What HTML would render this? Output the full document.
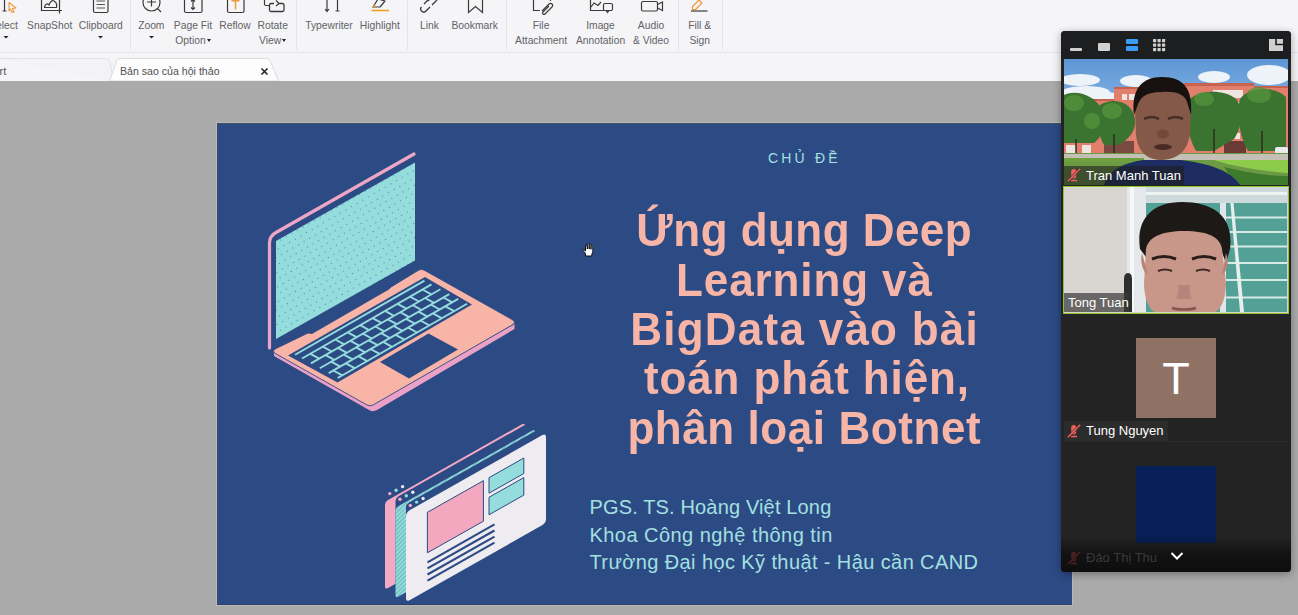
<!DOCTYPE html>
<html><head><meta charset="utf-8">
<style>
*{margin:0;padding:0;box-sizing:border-box}
html,body{width:1298px;height:615px;overflow:hidden;background:#aaaaaa;font-family:"Liberation Sans",sans-serif;position:relative}
.abs{position:absolute}
#toolbar{position:absolute;left:0;top:0;width:1298px;height:53px;background:#f5f5f7;border-bottom:1px solid #e6e6e8}
#tabs{position:absolute;left:0;top:53px;width:1298px;height:28px;background:#f5f5f7}
#grey{position:absolute;left:0;top:81px;width:1298px;height:534px;background:#aaaaaa}
#slide{position:absolute;left:217px;top:123px;width:855px;height:482px;background:#2c4a84;overflow:hidden;outline:1px solid #b8b8b8;box-shadow:inset 0 1px 0 #44505a,inset 1px 0 0 #3a4a6a,inset 0 -1px 0 #333d6a}
.tl{position:absolute;font-size:10.3px;color:#626266;white-space:nowrap;text-align:center;line-height:15px}
.sep{position:absolute;top:0;width:1px;height:50px;background:#e4e4e7}
.tline{position:absolute;left:387px;width:400px;height:50px;text-align:center;color:#f6b5a6;font-weight:bold;white-space:nowrap;font-size:44px;line-height:50px}
.tline span{display:inline-block;transform:scaleY(1.06);transform-origin:50% 40px}
.title{position:absolute;left:0;width:855px;text-align:center;color:#f6b5a6;font-weight:bold;white-space:nowrap}
.sub{position:absolute;left:372.5px;color:#a3e0e0;font-size:20px;line-height:24px;white-space:nowrap}
#zoom{position:absolute;left:1061px;top:31px;width:230px;height:541px;background:#232323;border-radius:4px;box-shadow:0 2px 8px rgba(0,0,0,.35);overflow:hidden}
.name{position:absolute;color:#fff;font-size:12.5px;white-space:nowrap;line-height:19px;background:rgba(40,40,40,.6);padding:0 4px}
.ar{display:inline-block;width:0;height:0;border-left:2.5px solid transparent;border-right:2.5px solid transparent;border-top:3px solid #222;vertical-align:middle;margin-left:1px;position:relative;top:-1px}
</style></head><body>
<div id="toolbar">
  <svg class="abs" style="left:0;top:0" width="730" height="16" viewBox="0 0 730 16" fill="none" stroke="#3a3a3a" stroke-width="1.2">
    <!-- select -->
    <path d="M4.5 0V11M2.5 11H6.5"/>
    <path d="M9 2.5L16 8L12.5 8.5L14 12L12 12.5L10.5 9L9 11Z" stroke="#f0963c" stroke-width="1.1" stroke-linejoin="round"/>
    <!-- snapshot -->
    <path d="M41.5 0V10.5H62M59.5 0V13.5"/>
    <path d="M44.5 7.5C45 4 47 3 49 5C50 2 52 0 54 1C56 2 57 5 56.5 7.5Z"/>
    <!-- clipboard -->
    <rect x="93.5" y="-4" width="14.5" height="16.5" rx="1.5"/>
    <path d="M96.5 1H105M96.5 4.5H105M96.5 8H105" stroke="#555"/>
    <!-- zoom -->
    <circle cx="151.5" cy="2.5" r="8.5"/>
    <path d="M157.5 8.5L161 12M151.5 -2V6.5M147 2H156"/>
    <!-- page fit -->
    <rect x="184.5" y="-5" width="17.5" height="17.5" rx="1.5"/>
    <path d="M193 0V9M191 1.5L193 -0.5L195 1.5M191 7.5L193 9.5L195 7.5"/>
    <!-- reflow -->
    <rect x="227.5" y="-5" width="16.5" height="17.5" rx="1.5"/>
    <path d="M235.5 0V9.5M231.5 0.8H239.5" stroke="#f0963c" stroke-width="1.4"/>
    <!-- rotate -->
    <path d="M264.5 -3V4Q264.5 5.5 266 5.5H269"/>
    <path d="M274 3.5H271Q269.5 3.5 269.5 5V10Q269.5 11.5 271 11.5H282.5Q284 11.5 284 10V5Q284 3.5 282.5 3.5H279" stroke-width="1.3"/>
    <path d="M276 0.5L279 3.5L276 6"/>
    <!-- typewriter -->
    <path d="M327 0V11M325 9L327 11.5L329 9M337.5 0V11M335.5 11H339.5"/>
    <!-- highlight -->
    <path d="M373 7L378 -1L385 1L380 7Z" stroke-linejoin="round"/>
    <path d="M372 7.5L375 5" stroke="#f0a020"/>
    <path d="M371.5 10.5H389" stroke="#f0a020" stroke-width="1.6"/>
    <!-- link -->
    <path d="M424 4L428 0M421.5 7A3 3 0 0 0 426 11L430 7M432 5L436 1A3 3 0 0 0 431.5 -3L428 1" stroke-width="1.3"/>
    <!-- bookmark -->
    <path d="M468.5 -2V12.5L475.5 6.5L482.5 12.5V-2"/>
    <!-- file attachment -->
    <path d="M533.5 0V10.5H540M550.5 0V1" />
    <path d="M542 11L549 4A2 2 0 0 1 552 7L545 14A1.2 1.2 0 0 1 543 12L549 6" stroke-width="1.1"/>
    <!-- image annotation -->
    <path d="M590.5 -1V10.5H604M591 7L594 3L598 5.5L601 2"/>
    <rect x="603.5" y="3.5" width="9" height="7" rx="1.5"/>
    <path d="M606 10.5L607.5 12.5L609 10.5"/>
    <!-- audio video -->
    <rect x="641.5" y="1.5" width="16" height="9.5" rx="1.5"/>
    <path d="M657.5 4.5L662.5 2V10.5L657.5 8"/>
    <!-- fill & sign -->
    <path d="M692.5 6.5L699 0L702 3L695.5 9.5H692.5Z" stroke="#f0963c" stroke-linejoin="round"/>
    <path d="M691 11H707.5"/>
  </svg>
  <div class="tl" style="left:-36.5px;top:18px;width:80px">Select</div>
  <div class="tl" style="left:9.7px;top:18px;width:80px">SnapShot</div>
  <div class="tl" style="left:60.8px;top:18px;width:80px">Clipboard</div>
  <div class="tl" style="left:111.3px;top:18px;width:80px">Zoom</div>
  <div class="tl" style="left:153.0px;top:18px;width:80px">Page Fit<br>Option<i class="ar"></i></div>
  <div class="tl" style="left:195.0px;top:18px;width:80px">Reflow</div>
  <div class="tl" style="left:232.7px;top:18px;width:80px">Rotate<br>View<i class="ar"></i></div>
  <div class="tl" style="left:289.0px;top:18px;width:80px">Typewriter</div>
  <div class="tl" style="left:339.9px;top:18px;width:80px">Highlight</div>
  <div class="tl" style="left:389.4px;top:18px;width:80px">Link</div>
  <div class="tl" style="left:434.7px;top:18px;width:80px">Bookmark</div>
  <div class="tl" style="left:501.1px;top:18px;width:80px">File<br>Attachment</div>
  <div class="tl" style="left:560.5px;top:18px;width:80px">Image<br>Annotation</div>
  <div class="tl" style="left:611.0px;top:18px;width:80px">Audio<br>&amp; Video</div>
  <div class="tl" style="left:659.7px;top:18px;width:80px">Fill &amp;<br>Sign</div>
  <svg class="abs" style="left:0;top:30px" width="300" height="16" fill="#222">
    <path d="M3.5 6H8.5L6 8.5Z"/><path d="M98 6H103L100.5 8.5Z"/><path d="M149 6H154L151.5 8.5Z"/>
  </svg>
  <div class="sep" style="left:130px"></div>
  <div class="sep" style="left:296px"></div>
  <div class="sep" style="left:407px"></div>
  <div class="sep" style="left:506px"></div>
  <div class="sep" style="left:678px"></div>
  <div class="sep" style="left:722px"></div>
</div>
<div id="tabs">
  <svg class="abs" style="left:0;top:0" width="300" height="28">
    <path d="M-2 5.5H106Q109 5.5 110 8L113 28" fill="#f3f3f5" stroke="#e2e2e6" stroke-width="1"/>
    <path d="M109.5 28L117 7.5Q118 5.5 121 5.5H266Q269 5.5 270 7.5L278.5 28Z" fill="#fdfdfe" stroke="#dcdce0" stroke-width="1"/>
    <path d="M261.5 15.5L267.5 21.5M267.5 15.5L261.5 21.5" stroke="#222" stroke-width="1.6"/>
  </svg>
  <div class="abs" style="left:-0.5px;top:12px;font-size:11px;color:#555">rt</div>
  <div class="abs" style="left:120px;top:12px;font-size:10.6px;color:#505050;white-space:nowrap">Bản sao của hội thảo</div>
</div>
<div id="grey"></div>
<div id="slide">
<svg class="abs" style="left:0;top:0" width="855" height="482" viewBox="0 0 855 482">
  <defs>
    <pattern id="dots" width="6.5" height="6.5" patternUnits="userSpaceOnUse" patternTransform="rotate(-30)">
      <circle cx="3.2" cy="3.2" r=".6" fill="#4d86a6"/>
    </pattern>
    <pattern id="hatch" width="3" height="3" patternUnits="userSpaceOnUse" patternTransform="rotate(45)">
      <rect width="3" height="3" fill="#93dbd9"/><rect width="1" height="3" fill="#6bb7c0"/>
    </pattern>
  </defs>
  <!-- lid outline (pink back) -->
  <path d="M52.5,225 V120 Q52.5,113 59,109.5 L197,31" fill="none" stroke="#eea6c6" stroke-width="3.2" stroke-linecap="round"/>
  <!-- screen -->
  <polygon points="59.0,118.0 198.0,39.5 198.0,137.5 59.0,216.0" fill="#95dcdc"/>
  <polygon points="59.0,118.0 198.0,39.5 198.0,137.5 59.0,216.0" fill="url(#dots)"/>
  <!-- base underside pink -->
  <path d="M57,233 L153,287.5 Q156,289 160,287 L297.5,206 L297.5,201 L153,282 L57,228 Z" fill="#eba0c6"/>
  <!-- base top salmon -->
  <path d="M57.5,230 Q55,228 58,226 L91,210 L95,210.5 L172,166 L174,164 L201,147.5 Q204,145.5 207,147 L296,197 Q299,199.5 296,201.5 L156,282 Q153,283.5 150,282 Z" fill="#f8b4a6" stroke="#2c4a84" stroke-width="0.9"/>
  <!-- keyboard -->
  <polygon points="71.0,232.5 208.0,154.0 255.0,181.5 120.5,259.5" fill="#2c4a84"/>
  <g stroke="#95dcdc" stroke-width="1.9" fill="none" stroke-linecap="butt"><path d="M78.1,231.8L207.5,157.6"/><path d="M85.0,235.5L214.5,161.4"/><path d="M93.9,240.4L223.4,166.2"/><path d="M102.8,245.3L232.3,171.1"/><path d="M111.7,250.1L241.2,175.9"/><path d="M120.7,255.0L250.1,180.8"/><path d="M93.4,230.8L102.3,235.6"/><path d="M105.8,223.6L114.7,228.5"/><path d="M118.3,216.5L127.2,221.4"/><path d="M130.7,209.4L139.6,214.2"/><path d="M143.2,202.2L152.1,207.1"/><path d="M155.6,195.1L164.5,199.9"/><path d="M168.1,187.9L177.0,192.8"/><path d="M180.5,180.8L189.4,185.7"/><path d="M193.0,173.7L201.9,178.5"/><path d="M205.4,166.5L214.4,171.4"/><path d="M108.5,232.1L117.4,236.9"/><path d="M120.9,224.9L129.9,229.8"/><path d="M133.4,217.8L142.3,222.6"/><path d="M145.9,210.6L154.8,215.5"/><path d="M158.3,203.5L167.2,208.4"/><path d="M170.8,196.4L179.7,201.2"/><path d="M183.2,189.2L192.1,194.1"/><path d="M195.7,182.1L204.6,187.0"/><path d="M208.1,175.0L217.0,179.8"/><path d="M114.3,238.7L123.2,243.6"/><path d="M126.7,231.6L135.7,236.4"/><path d="M139.2,224.4L148.1,229.3"/><path d="M151.7,217.3L160.6,222.2"/><path d="M164.1,210.2L173.0,215.0"/><path d="M176.6,203.0L185.5,207.9"/><path d="M189.0,195.9L197.9,200.7"/><path d="M201.5,188.7L210.4,193.6"/><path d="M213.9,181.6L222.8,186.5"/><path d="M226.4,174.5L235.3,179.3"/><path d="M116.3,247.5L125.3,252.3"/><path d="M128.8,240.3L137.7,245.2"/><path d="M141.3,233.2L150.2,238.1"/><path d="M153.7,226.1L162.6,230.9"/><path d="M166.2,218.9L175.1,223.8"/><path d="M178.6,211.8L187.5,216.7"/><path d="M191.1,204.7L200.0,209.5"/><path d="M203.5,197.5L212.4,202.4"/><path d="M216.0,190.4L224.9,195.3"/><path d="M228.4,183.3L237.3,188.1"/></g>
  <!-- trackpad -->
  <polygon points="163.0,239.0 211.5,210.5 241.0,226.5 192.0,255.5" fill="#2c4a84"/>
  <!-- browser pages -->
  <path d="M168.0,381.7 Q168.0,378.7 171.0,377.0 L305.0,301.3 Q308.0,299.6 308.0,302.6 L308.0,384.6 Q308.0,387.6 305.0,389.3 L171.0,465.0 Q168.0,466.7 168.0,463.7 Z" fill="#f4a9c4"/>
  <path d="M178.5,378.0 Q178.5,375.0 181.5,373.3 L315.0,297.9 Q318.0,296.2 318.0,299.2 L318.0,385.2 Q318.0,388.2 315.0,389.9 L181.5,465.3 Q178.5,467.0 178.5,464.0 Z" fill="#2c4a84"/>
  <path d="M178.5,387.8 Q178.5,384.8 181.5,383.1 L315.0,307.7 Q318.0,306.0 318.0,309.0 L318.0,393.5 Q318.0,396.5 315.0,398.2 L181.5,473.6 Q178.5,475.3 178.5,472.3 Z" fill="url(#hatch)"/>
  <path d="M189.0,384.2 Q189.0,381.2 192.0,379.5 L326.0,303.8 Q329.0,302.1 329.0,305.1 L329.0,391.1 Q329.0,394.1 326.0,395.8 L192.0,471.5 Q189.0,473.2 189.0,470.2 Z" fill="#2c4a84"/>
  <path d="M189.0,393.2 Q189.0,389.2 193.0,386.9 L325.0,312.3 Q329.0,310.1 329.0,314.1 L329.0,396.1 Q329.0,400.1 325.0,402.3 L193.0,476.9 Q189.0,479.2 189.0,475.2 Z" fill="#eeebf1"/>
  <polygon points="210.4,389.3 266.4,357.7 266.4,398.2 210.4,429.8" fill="#f4a8c0" stroke="#2c4a84" stroke-width="1"/>
  <polygon points="272.0,354.7 306.8,335.0 306.8,350.5 272.0,370.2" fill="#95dcdc" stroke="#2c4a84" stroke-width="1"/>
  <polygon points="272.0,374.3 306.8,354.6 306.8,372.1 272.0,391.8" fill="#95dcdc" stroke="#2c4a84" stroke-width="1"/>
  <g stroke="#2c4a84" stroke-width="2.1"><path d="M210.5,439.3 L277.5,401.4"/><path d="M210.5,445.4 L277.5,407.5"/><path d="M210.5,451.5 L277.5,413.6"/><path d="M210.5,457.6 L277.5,419.7"/></g>
  <g><circle cx="172.8" cy="370.6" r="1.7" fill="#f4a9c4"/><circle cx="179.1" cy="367.2" r="1.7" fill="#95dcdc"/><circle cx="185.6" cy="363.6" r="1.7" fill="#eeebf1"/><circle cx="183.0" cy="376.2" r="1.7" fill="#f4a9c4"/><circle cx="189.3" cy="372.8" r="1.7" fill="#95dcdc"/><circle cx="195.8" cy="369.2" r="1.7" fill="#eeebf1"/><circle cx="193.3" cy="382.5" r="1.7" fill="#f4a9c4"/><circle cx="199.6" cy="379.1" r="1.7" fill="#95dcdc"/><circle cx="206.1" cy="375.5" r="1.7" fill="#eeebf1"/></g>
</svg>
  <div class="abs" style="left:551px;top:27px;color:#a3e0e0;font-size:14px;letter-spacing:3.2px">CHỦ ĐỀ</div>
  <div class="tline" style="top:83.4px"><span style="letter-spacing:0.46px;margin-right:-0.46px">Ứng dụng Deep</span></div>
  <div class="tline" style="top:132.7px"><span style="letter-spacing:0.9px;margin-right:-0.9px">Learning và</span></div>
  <div class="tline" style="top:182.0px"><span style="letter-spacing:1.25px;margin-right:-1.25px">BigData vào bài</span></div>
  <div class="tline" style="left:389.5px;top:231.3px"><span style="letter-spacing:0.86px;margin-right:-0.86px">toán phát hiện,</span></div>
  <div class="tline" style="top:280.6px"><span style="letter-spacing:0.57px;margin-right:-0.57px">phân loại Botnet</span></div>
  <div class="sub" style="top:372px;letter-spacing:0.15px">PGS. TS. Hoàng Việt Long</div>
  <div class="sub" style="top:399.5px;letter-spacing:0.45px">Khoa Công nghệ thông tin</div>
  <div class="sub" style="top:427px;letter-spacing:0.4px">Trường Đại học Kỹ thuật - Hậu cần CAND</div>
</div>
<svg class="abs" style="left:582px;top:243px" width="13" height="14" viewBox="0 0 13 14">
  <path d="M3.5 13V10.5L1 7.5Q0.5 6.3 1.8 6.5L3.5 8V3Q3.5 2 4.5 2.2Q5.3 2.4 5.3 3V6V1.6Q5.3 0.6 6.3 0.8Q7.2 1 7.2 1.8V6V2Q7.2 1 8.2 1.2Q9 1.4 9 2.3V6.3V3.4Q9 2.5 9.9 2.6Q10.8 2.8 10.8 3.6V8.5Q10.8 10 9.8 11V13Z" fill="#fff" stroke="#000" stroke-width=".9" stroke-linejoin="round"/>
</svg>
<div id="zoom">
  <div class="abs" style="left:0;top:0;width:230px;height:28px;background:#1d1e20"></div>
  <svg class="abs" style="left:0;top:0" width="230" height="28">
    <rect x="9" y="17" width="12" height="3" rx="1" fill="#d0d0d0"/>
    <rect x="37" y="12" width="12" height="8" rx="1" fill="#d0d0d0"/>
    <rect x="65" y="8" width="12" height="5" rx="1.2" fill="#3b9cf7"/>
    <rect x="65" y="15" width="12" height="5" rx="1.2" fill="#3b9cf7"/>
    <g fill="#d0d0d0">
      <rect x="92" y="8" width="3.2" height="3.2" rx=".6"/><rect x="96.5" y="8" width="3.2" height="3.2" rx=".6"/><rect x="101" y="8" width="3.2" height="3.2" rx=".6"/>
      <rect x="92" y="12.5" width="3.2" height="3.2" rx=".6"/><rect x="96.5" y="12.5" width="3.2" height="3.2" rx=".6"/><rect x="101" y="12.5" width="3.2" height="3.2" rx=".6"/>
      <rect x="92" y="17" width="3.2" height="3.2" rx=".6"/><rect x="96.5" y="17" width="3.2" height="3.2" rx=".6"/><rect x="101" y="17" width="3.2" height="3.2" rx=".6"/>
    </g>
    <path d="M208 8H222V20H208Z" fill="#d0d0d0"/>
    <path d="M215 7.5V13.5H223" stroke="#1d1e20" stroke-width="1.6" fill="none"/>
  </svg>
  <!-- video 1 -->
  <div class="abs" style="left:3px;top:28px;width:224px;height:126px;overflow:hidden;background:linear-gradient(#6a9fd8 0%,#8fb6e0 25%,#b9cfe6 40%)">
    <svg class="abs" style="left:0;top:0;filter:blur(0.6px)" width="224" height="126" viewBox="0 0 224 126">
      <defs><linearGradient id="sky" x1="0" y1="0" x2="0" y2="1"><stop offset="0" stop-color="#5d97d6"/><stop offset=".6" stop-color="#8db8e4"/><stop offset="1" stop-color="#b8d2ea"/></linearGradient></defs>
      <rect width="224" height="100" fill="url(#sky)"/>
      <g fill="#eef3f9">
        <ellipse cx="16" cy="21" rx="20" ry="6"/><ellipse cx="22" cy="33" rx="24" ry="6"/><ellipse cx="72" cy="22" rx="16" ry="6"/>
        <ellipse cx="150" cy="18" rx="16" ry="6"/><ellipse cx="205" cy="16" rx="22" ry="10"/><ellipse cx="40" cy="37" rx="16" ry="4"/>
        
      </g>
      <path d="M0 40H50V28H78V40H120V24H190V27H224V97H0Z" fill="#e17f6c"/>
      <path d="M0 40H50V28H78V30H50V42H0Z M120 24H190V27H224V29H190V27H120Z" fill="#c4624f"/>
      <path d="M120 24H190V26H120Z" fill="#c9644f"/>
      <g fill="#eee4e0">
        <rect x="149" y="31" width="30" height="8"/><rect x="157" y="43" width="22" height="8"/>
        <rect x="65" y="35" width="6" height="6"/><rect x="58" y="35" width="5" height="6"/>
        <rect x="2" y="86" width="10" height="8"/><rect x="18" y="86" width="9" height="8"/>
        <rect x="152" y="74" width="24" height="6"/><rect x="112" y="75" width="10" height="6"/>
      </g>
      <rect x="160" y="82" width="22" height="12" fill="#6a3a34"/>
      <rect x="40" y="82" width="30" height="12" fill="#7a4a40"/>
      <g fill="#3a7430">
        <path d="M0 36C12 30 30 36 38 50C44 62 40 76 30 84H0Z"/>
        <path d="M36 46C48 38 66 42 70 56C74 70 66 80 54 86H40C34 76 32 60 36 46Z"/>
        <path d="M124 42C134 30 160 30 172 40C180 50 178 68 170 80L150 92H132C124 78 120 58 124 42Z"/>
        <path d="M176 40C184 28 210 26 222 38V92H184C176 78 172 56 176 40Z"/>
      </g>
      <g fill="#55953c" opacity=".75">
        <ellipse cx="10" cy="44" rx="10" ry="8"/><ellipse cx="28" cy="62" rx="8" ry="8"/><ellipse cx="48" cy="52" rx="10" ry="8"/>
        <ellipse cx="140" cy="40" rx="10" ry="7"/><ellipse cx="195" cy="36" rx="12" ry="8"/>
      </g>
      <g stroke="#2a2a22" stroke-width="1.4"><path d="M12 94V80M50 94V75M150 94V70M198 94V72"/></g>
      <rect x="211" y="88" width="13" height="7" rx="2" fill="#e8eaee"/>
      <path d="M0 94H224V126H0Z" fill="#6c9a44"/>
      <path d="M0 95H224V101H0Z" fill="#c4c0b6"/>
      <path d="M0 99H80V103H0Z" fill="#6ea040"/>
      <path d="M150 101H224V114C200 112 170 108 150 101Z" fill="#8ccc4a"/>
      <path d="M160 108C185 114 205 117 224 117V126H172Z" fill="#3e7a2c"/>
      <!-- man -->
      <path d="M40 126C44 112 58 104 80 101H116C142 104 165 110 176 126Z" fill="#1d2c62"/>
      <path d="M71 50C70 30 80 20 98 20C118 20 127 30 127 50L126 74C124 92 114 100 98 101C82 101 74 92 72 76Z" fill="#84594a"/>
      <path d="M70 56C67 30 78 18 98 18C120 18 129 30 127 56L124 46C122 36 114 32 98 33C82 33 76 38 73 48Z" fill="#17120f"/>
      <path d="M80 60Q88 56 95 60M104 60Q111 56 119 60" stroke="#3a2620" stroke-width="2.6" fill="none" opacity=".8"/>
      <ellipse cx="99" cy="75" rx="6" ry="4.5" fill="#74493a"/>
      <ellipse cx="99" cy="88" rx="9" ry="3" fill="#4a2a24"/>

    </svg>
    <div class="abs" style="left:0;top:107px;width:120px;height:19px;background:rgba(30,30,30,.6)"></div>
    <svg class="abs" style="left:3px;top:109px" width="14" height="14"><rect x="4.2" y="1" width="5" height="9.5" rx="2.5" fill="#f0605e"/><path d="M4 12.5H10" stroke="#f0605e" stroke-width="1.6"/><path d="M0.8 13.2L13.2 0.8" stroke="#2a2a2a" stroke-width="3" opacity=".6"/><path d="M0.8 13.2L13.2 0.8" stroke="#f0605e" stroke-width="1.5"/></svg>
    <div class="abs" style="left:22px;top:107px;color:#fff;font-size:13px;line-height:19px;white-space:nowrap">Tran Manh Tuan</div>
  </div>
  <!-- video 2 -->
  <div class="abs" style="left:2px;top:155px;width:226px;height:128px;border:1.5px solid #8cc628;overflow:hidden;background:#d8d4cf">
    <svg class="abs" style="left:0;top:0;filter:blur(0.6px)" width="223" height="125" viewBox="0 0 223 125">
      <rect x="0" y="0" width="65" height="125" fill="#d9d6d1"/>
      <rect x="63" y="0" width="160" height="125" fill="#dfe4e6"/>
      <rect x="82" y="16" width="141" height="109" fill="#52a096"/>
      <g fill="#d8eae6"><rect x="82" y="29.5" width="141" height="2"/><rect x="82" y="44" width="141" height="2"/><rect x="82" y="58.5" width="141" height="2"/><rect x="82" y="75" width="141" height="2"/><rect x="82" y="92" width="141" height="2"/><rect x="82" y="109.5" width="141" height="2"/></g>
      <path d="M165 0L168 0L180 125H176Z" fill="#e6eeee"/>
      <rect x="156" y="0" width="6" height="125" fill="#dfe6e8"/>
      <rect x="63" y="0" width="160" height="16" fill="#cdd9da"/>
      <rect x="63" y="5" width="160" height="3" fill="#eef2f3"/>
      <rect x="63" y="0" width="19" height="125" fill="#e4e8ea"/>
      <rect x="66" y="0" width="4" height="125" fill="#f6f8f8"/>
      <path d="M60 125V92Q60 86 64 86Q68 86 68 92V125Z" fill="#2e2e2e"/>
      <path d="M76 62C72 34 86 15 118 15C150 15 170 30 166 62L162 76L156 60C150 50 136 46 120 46C104 46 92 50 86 60L82 70Z" fill="#1d1917"/>
      <path d="M82 62C84 50 98 44 120 44C144 44 156 50 158 62L162 96C162 112 156 125 150 125H92C86 125 80 112 80 96Z" fill="#c9978a"/>
      <path d="M78 66C76 74 78 84 84 88Z M162 66C165 74 164 84 158 88Z" fill="#b98478"/>
      <path d="M88 72Q100 67 112 72M128 72Q140 67 152 72" stroke="#2a1d1a" stroke-width="3" fill="none"/>
      <path d="M94 84Q101 81 108 84M132 84Q139 81 146 84" stroke="#3a2622" stroke-width="2.2" fill="none"/>
      <path d="M114 98C115 106 113 110 112 112H128C127 110 125 106 126 98" fill="#b8837a"/>
      <path d="M108 121C114 123 126 123 132 121" stroke="#8a5250" stroke-width="2.5" fill="none"/>
    </svg>
    <div class="abs" style="left:0;top:105.5px;width:65px;height:19px;background:rgba(60,60,60,.72)"></div>
    <div class="abs" style="left:4px;top:105.5px;color:#fff;font-size:13px;line-height:19px;white-space:nowrap">Tong Tuan</div>
  </div>
  <!-- tile 3 -->
  <div class="abs" style="left:75px;top:307px;width:80px;height:80px;background:#8f7264"></div>
  <div class="abs" style="left:75px;top:320px;width:80px;text-align:center;color:#fff;font-size:45px;line-height:56px;-webkit-text-stroke:0;font-weight:normal">T</div>
  <div class="abs" style="left:3px;top:390px;width:104px;height:20px;background:#2c2c2c"></div>
  <svg class="abs" style="left:6px;top:393px" width="14" height="14"><rect x="4.2" y="1" width="5" height="9.5" rx="2.5" fill="#f0605e"/><path d="M4 12.5H10" stroke="#f0605e" stroke-width="1.6"/><path d="M0.8 13.2L13.2 0.8" stroke="#2a2a2a" stroke-width="3" opacity=".6"/><path d="M0.8 13.2L13.2 0.8" stroke="#f0605e" stroke-width="1.5"/></svg>
  <div class="abs" style="left:25px;top:390px;color:#fff;font-size:13px;line-height:20px;white-space:nowrap">Tung Nguyen</div>
  <div class="abs" style="left:3px;top:410px;width:224px;height:1px;background:#2b2b2b"></div>
  <!-- tile 4 -->
  <div class="abs" style="left:75px;top:435px;width:80px;height:77px;background:#061f58"></div>
  <div class="abs" style="left:0;top:505px;width:230px;height:36px;background:linear-gradient(rgba(20,20,20,0),rgba(14,14,14,.85) 55%,#0e0e0e)"></div>
  <svg class="abs" style="left:6px;top:520px" width="14" height="14" opacity=".35"><rect x="4.2" y="1" width="5" height="9.5" rx="2.5" fill="#c04040"/><path d="M4 12.5H10" stroke="#c04040" stroke-width="1.6"/><path d="M0.8 13.2L13.2 0.8" stroke="#111" stroke-width="3" opacity=".6"/><path d="M0.8 13.2L13.2 0.8" stroke="#c04040" stroke-width="1.5"/></svg>
  <div class="abs" style="left:25px;top:518px;color:#3a3a3a;font-size:13px;line-height:18px;white-space:nowrap">Đảo Thị Thu</div>
  <svg class="abs" style="left:109px;top:520px" width="14" height="10"><path d="M1.5 2L7 7.5L12.5 2" stroke="#fff" stroke-width="2" fill="none"/></svg>
</div>
</body></html>
